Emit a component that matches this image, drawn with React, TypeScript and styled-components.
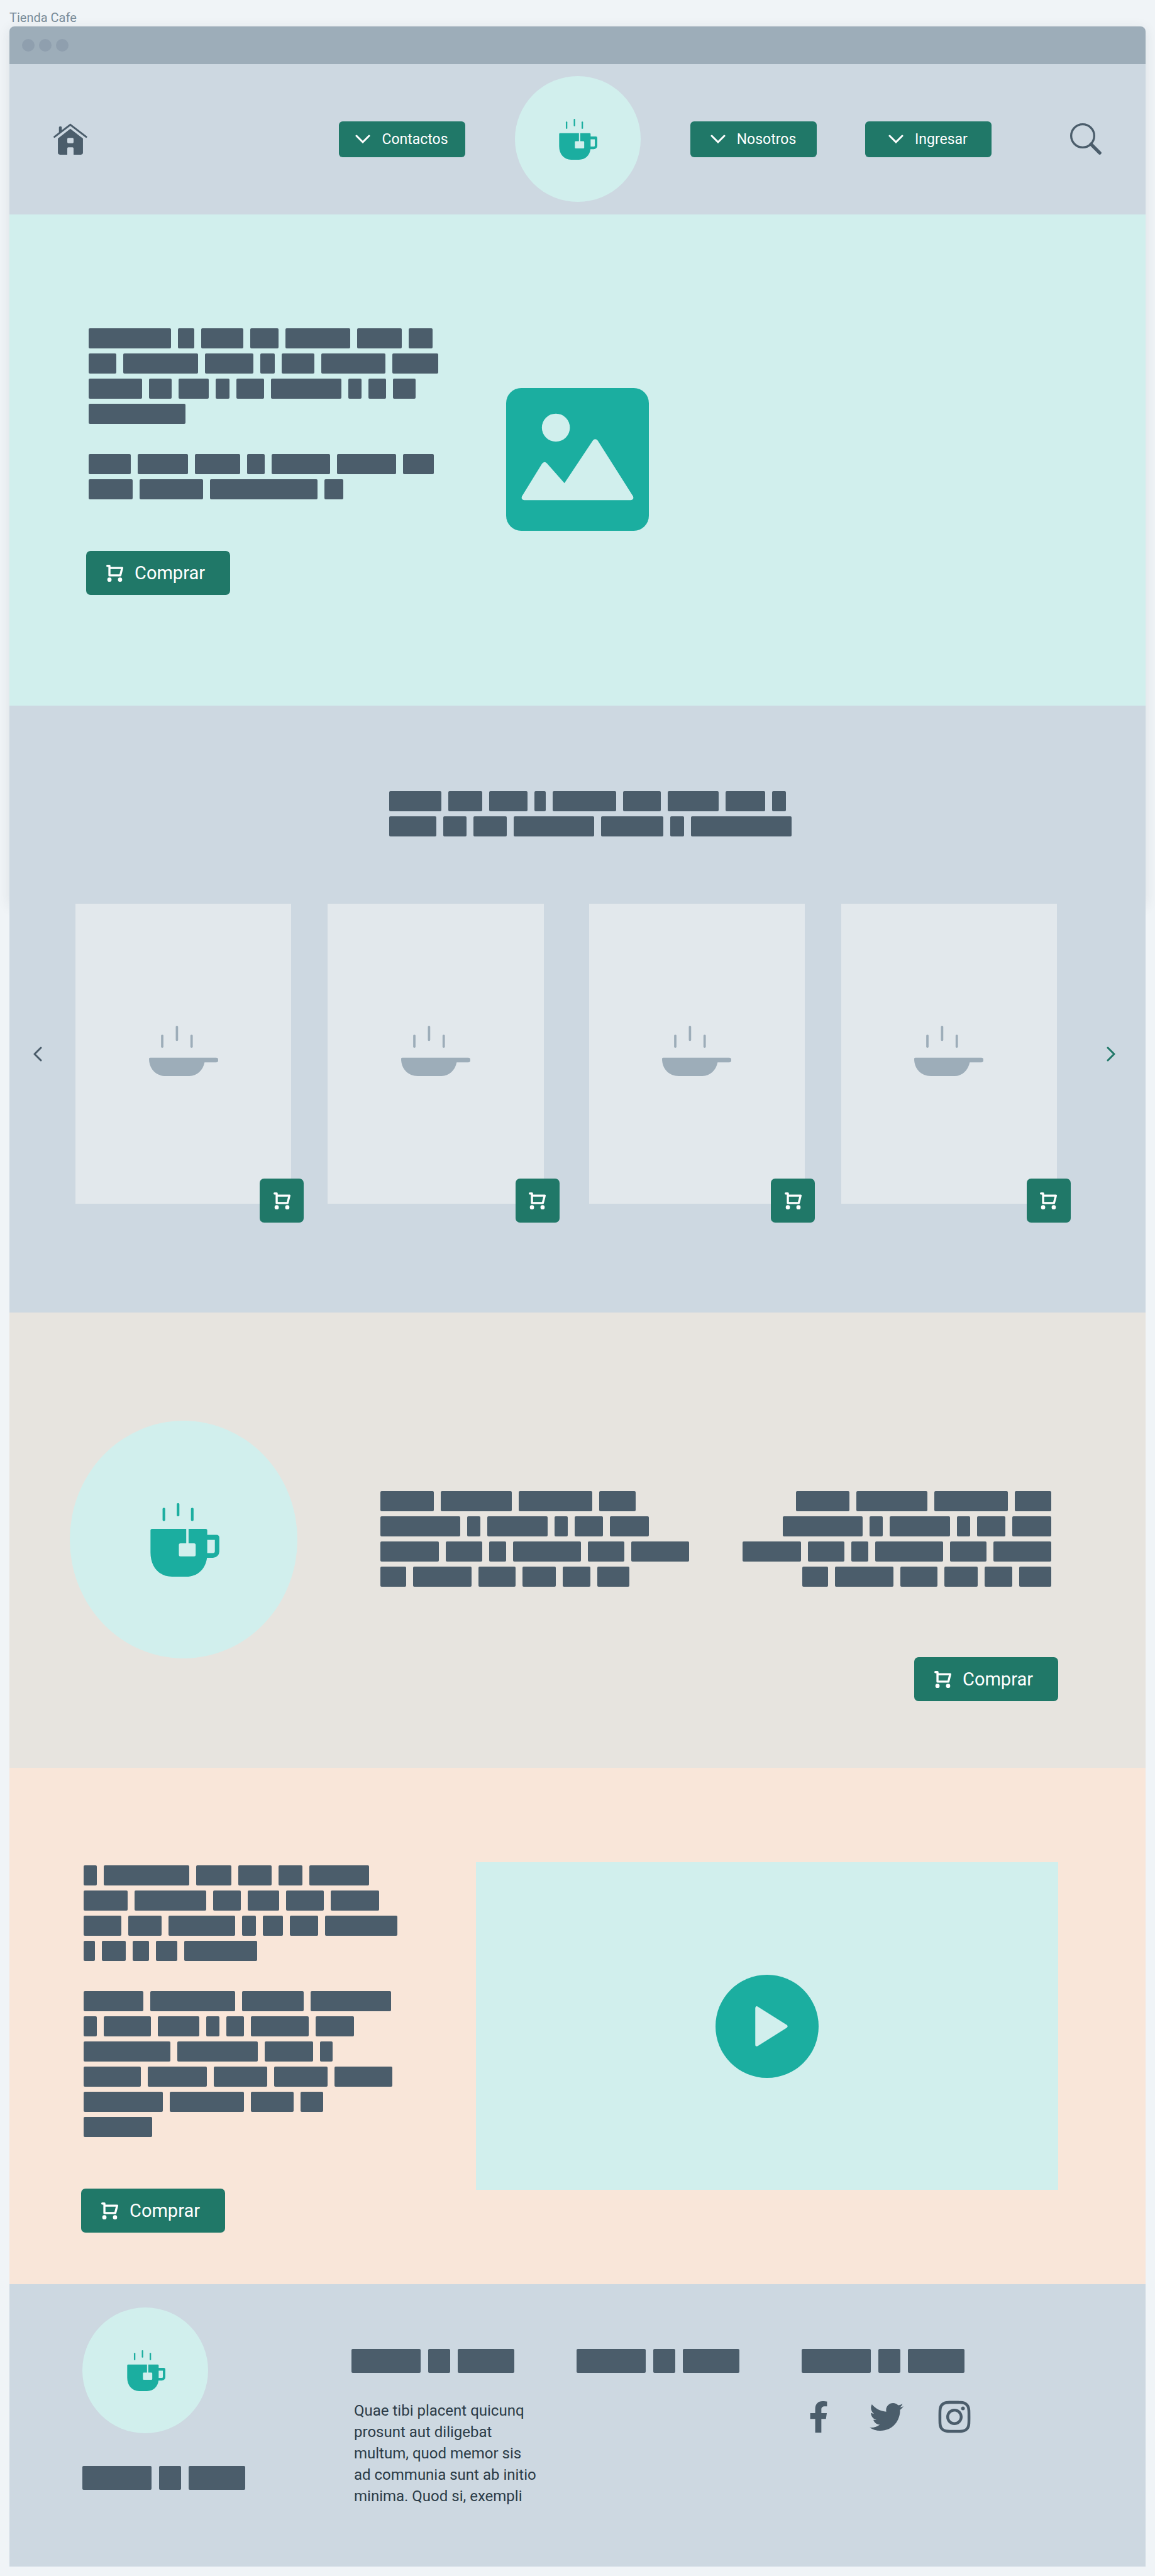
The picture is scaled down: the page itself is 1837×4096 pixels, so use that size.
import React from 'react';
import styled, { createGlobalStyle } from 'styled-components';
import { FaFacebookF, FaInstagram, FaTwitter } from 'react-icons/fa';

const color = {
  canvas: '#f0f4f7',
  chrome: '#9dadb9',
  chromeDot: '#8f9fae',
  fog: '#cdd8e1',
  mint: '#d1efed',
  teal: '#1baea0',
  green: '#207868',
  slate: '#4b5d6b',
  card: '#e2e8ec',
  sand: '#e7e4df',
  peach: '#f9e6d9',
  ink: '#2b3b47',
  label: '#7a8c99',
};

const GlobalStyle = createGlobalStyle`
  *, *::before, *::after { box-sizing: border-box; }
  body {
    margin: 0;
    background: ${color.canvas};
    font-family: Roboto, "Liberation Sans", sans-serif;
  }
  button { font-family: inherit; }
`;

/* ---------- shared parts ---------- */

const Page = styled.div`
  padding: 16px 15px 15px;
`;

const FrameLabel = styled.h1`
  margin: 0 0 2px;
  font-size: 20px;
  line-height: 24px;
  font-weight: 400;
  color: ${color.label};
`;

const Frame = styled.div`
  position: relative;
  z-index: 0;

  &::before {
    content: '';
    position: absolute;
    z-index: -1;
    inset: 0 0 auto;
    height: 1396px;
    border-radius: 8px;
    box-shadow: 0 4px 20px rgba(40, 50, 60, 0.1);
  }
`;

const SolidButton = styled.button`
  display: inline-flex;
  align-items: center;
  justify-content: center;
  border: 0;
  background: ${color.green};
  color: #fff;
  font-weight: 400;
  cursor: pointer;
`;

const BuyButtonBox = styled(SolidButton)`
  height: 70px;
  gap: 18px;
  padding: 0 40px 0 32px;
  border-radius: 7px;
  font-size: 29px;
  line-height: 34px;
`;

const Lines = styled.div<{ $end?: boolean }>`
  display: flex;
  flex-direction: column;
  align-items: ${(p) => (p.$end ? 'flex-end' : 'flex-start')};
  gap: 8px;
`;

const Line = styled.div<{ $tall?: boolean }>`
  display: flex;
  gap: ${(p) => (p.$tall ? 12 : 11)}px;
  height: ${(p) => (p.$tall ? 38 : 32)}px;
`;

const Word = styled.span`
  border-radius: 2px;
  background: ${color.slate};
`;

const Disc = styled.div<{ $large?: boolean }>`
  display: flex;
  flex: none;
  align-items: center;
  justify-content: center;
  width: ${(p) => (p.$large ? 362 : 200)}px;
  height: ${(p) => (p.$large ? 378 : 200)}px;
  border-radius: 50%;
  background: ${color.mint};
`;

const Redacted = ({ lines, end }: { lines: number[][]; end?: boolean }) => (
  <Lines $end={end}>
    {lines.map((line, i) => (
      <Line key={i}>
        {line.map((width, j) => (
          <Word key={j} style={{ width }} />
        ))}
      </Line>
    ))}
  </Lines>
);

const RedactedTitle = () => (
  <Line $tall>
    {[110, 35, 90].map((width) => (
      <Word key={width} style={{ width }} />
    ))}
  </Line>
);

/* ---------- drawings ---------- */

const CupIcon = ({ width, height }: { width: number; height: number }) => (
  <svg width={width} height={height} viewBox="-5 0 136 140" fill={color.teal} aria-hidden="true">
    <rect x="23" y="9" width="5" height="25" rx="2" />
    <rect x="50" y="0" width="5" height="25" rx="2" />
    <rect x="77" y="9" width="5" height="25" rx="2" />
    <path
      fillRule="evenodd"
      d="M3 49H68V76.500H57a3 3 0 0 0-3 3V98.500a3 3 0 0 0 3 3H83a3 3 0 0 0 3-3V79.500a3 3 0 0 0-3-3H72.500V49H105a3 3 0 0 1 3 3V60.500H126a5 5 0 0 1 5 5V92a12 12 0 0 1-12 12H107.500C105 125 90 140 68 140H41C16 140 0 121 0 94V52a3 3 0 0 1 3-3ZM108 70V95H119a3.500 3.500 0 0 0 3.500-3.500V70Z"
    />
  </svg>
);

const PanIcon = () => (
  <svg width="110" height="90" viewBox="0 0 132 108" fill={color.chrome} aria-hidden="true">
    <rect x="23" y="17" width="4.500" height="25" rx="2" />
    <rect x="51" y="0" width="4.500" height="29" rx="2" />
    <rect x="79" y="17" width="4.500" height="25" rx="2" />
    <path d="M2 61H128a4 4 0 0 1 4 4V66a4 4 0 0 1-4 4H106C103 85 92 96 77 96H32C13 96 0 82 0 63a2 2 0 0 1 2-2Z" />
  </svg>
);

const CartIcon = () => (
  <svg width="27" height="27" viewBox="0 0 32 32" aria-hidden="true">
    <g fill="none" stroke="#fff" strokeWidth="4" strokeLinecap="round" strokeLinejoin="round">
      <path d="M2 2H6V20H26.500L30 6H6" />
    </g>
    <circle cx="6" cy="28" r="4" fill="#fff" />
    <circle cx="26" cy="28" r="4" fill="#fff" />
  </svg>
);

const ChevronDown = () => (
  <svg width="24" height="14" viewBox="0 0 24 14" aria-hidden="true">
    <path d="M2 2L12 12L22 2" fill="none" stroke="#fff" strokeWidth="3" strokeLinecap="round" />
  </svg>
);

const HomeIcon = () => (
  <svg width="54" height="50" viewBox="0 0 65 60" fill={color.slate} aria-hidden="true">
    <path d="M10.500 20V8a2 2 0 0 1 2-2h1.500a2 2 0 0 1 2 2v7.500Z" />
    <path
      d="M2 26L32.300 2.700L62.700 26"
      fill="none"
      stroke={color.slate}
      strokeWidth="3.600"
      strokeLinecap="round"
    />
    <path
      fillRule="evenodd"
      d="M32.300 10.500L56.500 29V56a4 4 0 0 1-4 4H38.500V48a2 2 0 0 0-2-2h-8a2 2 0 0 0-2 2V60H12.500a4 4 0 0 1-4-4V29ZM28.500 28a2 2 0 0 0-2 2v6a2 2 0 0 0 2 2h8a2 2 0 0 0 2-2v-6a2 2 0 0 0-2-2Z"
    />
  </svg>
);

const SearchIcon = () => (
  <svg width="50" height="50" viewBox="0 0 60 60" fill="none" stroke={color.slate} aria-hidden="true">
    <circle cx="24" cy="24" r="22" strokeWidth="4" />
    <path d="M40 40L56.500 56.500" strokeWidth="6.500" strokeLinecap="round" />
    <path d="M38 38L43 43" strokeWidth="5" />
  </svg>
);

const PictureIcon = () => (
  <svg width="227" height="227" viewBox="0 0 815 815" role="img" aria-label="Imagen">
    <rect width="815" height="815" rx="86" fill={color.teal} />
    <circle cx="284" cy="226" r="80" fill={color.mint} />
    <path
      fill={color.mint}
      d="M90 618L205 432Q218 414 233 430L333 543L495 300Q508 283 523 300L725 618Q731 638 712 640H103Q84 638 90 618Z"
    />
  </svg>
);

const PlayIcon = () => (
  <svg width="164" height="164" viewBox="0 0 63 63" aria-hidden="true">
    <circle cx="31.500" cy="31.500" r="31.500" fill={color.teal} />
    <path
      d="M25.300 20.300V42.700L43 31.500Z"
      fill={color.mint}
      stroke={color.mint}
      strokeWidth="2"
      strokeLinejoin="round"
    />
  </svg>
);

const BuyButton = () => (
  <BuyButtonBox type="button">
    <CartIcon />
    Comprar
  </BuyButtonBox>
);

/* ---------- browser bar and header ---------- */

const Chrome = styled.div`
  display: flex;
  align-items: center;
  gap: 7px;
  height: 60px;
  padding: 0 20px;
  border-radius: 8px 8px 0 0;
  background: ${color.chrome};
`;

const ChromeDot = styled.span`
  width: 20px;
  height: 20px;
  border-radius: 50%;
  background: ${color.chromeDot};
`;

const Header = styled.header`
  display: grid;
  grid-template-columns: 1fr auto 1fr;
  align-items: center;
  column-gap: 79px;
  padding: 19px 70px 20px;
  background: ${color.fog};
`;

const HeaderSide = styled.div`
  display: flex;
  align-items: center;
  justify-content: space-between;
`;

const HeaderNav = styled.nav`
  display: flex;
  gap: 77px;
`;

const NavButton = styled(SolidButton)`
  gap: 18px;
  width: 201px;
  height: 57px;
  border-radius: 6px;
  font-size: 23px;
  line-height: 27px;
`;

const IconLink = styled.a`
  display: flex;
`;

const IconButton = styled.button<{ $tone?: string }>`
  display: flex;
  padding: 0;
  border: 0;
  background: none;
  color: ${(p) => p.$tone || color.slate};
  cursor: pointer;
`;

const NavItem = ({ children }: { children: React.ReactNode }) => (
  <NavButton type="button">
    <ChevronDown />
    {children}
  </NavButton>
);

/* ---------- hero ---------- */

const Hero = styled.section`
  display: grid;
  grid-template-columns: 1fr auto 1fr;
  align-items: center;
  padding: 174px 122px 176px;
  background: ${color.mint};
`;

const CopyColumn = styled.div<{ $top?: number }>`
  display: flex;
  flex-direction: column;
  align-items: flex-start;
  gap: 82px;
  padding-top: ${(p) => p.$top || 0}px;
`;

const Copy = styled.div`
  display: flex;
  flex-direction: column;
  gap: 48px;
  padding-left: 4px;
`;

/* ---------- products ---------- */

const Products = styled.section`
  padding: 136px 48px 143px 38px;
  background: ${color.fog};
`;

const ProductsTitle = styled.div`
  display: flex;
  justify-content: center;
  padding-left: 51px;
  margin-bottom: 107px;
`;

const Carousel = styled.div`
  display: grid;
  grid-template-columns: 14px 1fr 14px;
  align-items: center;
`;

const CardPairs = styled.div`
  display: grid;
  grid-template-columns: 1fr 1fr;
  gap: 72px;
  padding: 0 79px 0 53px;
`;

const CardPair = styled.div`
  display: grid;
  grid-template-columns: 1fr 1fr;
  gap: 58px;
`;

const Card = styled.article`
  display: flex;
  align-items: center;
  justify-content: center;
  aspect-ratio: 410 / 570;
  background: ${color.card};
`;

const CartRow = styled.div`
  position: relative;
  display: flex;
  justify-content: space-between;
  margin-top: -40px;
  padding: 0 71px 0 360px;
`;

const CartButton = styled(SolidButton)`
  width: 70px;
  height: 70px;
  padding: 0;
  border-radius: 7px;
`;

const ArrowIcon = ({ d }: { d: string }) => (
  <svg width="14" height="24" viewBox="0 0 14 24" aria-hidden="true">
    <path
      d={d}
      fill="none"
      stroke="currentColor"
      strokeWidth="3"
      strokeLinecap="round"
      strokeLinejoin="round"
    />
  </svg>
);

/* ---------- feature ---------- */

const Feature = styled.section`
  display: flex;
  align-items: flex-start;
  padding: 172px 139px 106px 96px;
  background: ${color.sand};
`;

const FeatureText = styled.div`
  padding: 112px 0 0 132px;
`;

const FeatureAside = styled.div`
  display: flex;
  flex-direction: column;
  align-items: flex-end;
  gap: 112px;
  margin-left: auto;
  padding-top: 112px;
`;

const AsideCopy = styled.div`
  padding-right: 11px;
`;

/* ---------- video ---------- */

const VideoSection = styled.section`
  display: grid;
  grid-template-columns: 628fr 926fr;
  align-items: start;
  padding: 150px 139px 82px 114px;
  background: ${color.peach};
`;

const VideoBox = styled.div`
  display: flex;
  align-items: center;
  justify-content: center;
  aspect-ratio: 16 / 9;
  background: ${color.mint};
`;

/* ---------- footer ---------- */

const Footer = styled.footer`
  display: grid;
  grid-template-columns: 428fr 358fr 358fr 547fr;
  padding: 37px 0 95px 116px;
  background: ${color.fog};
`;

const FooterBrand = styled.div`
  display: flex;
  flex-direction: column;
  align-items: flex-start;
  gap: 52px;
`;

const FooterColumn = styled.div`
  display: flex;
  flex-direction: column;
  gap: 43px;
  padding-top: 66px;
`;

const FooterText = styled.p`
  max-width: 299px;
  margin: 0;
  padding-left: 4px;
  font-size: 24px;
  line-height: 34px;
  color: ${color.ink};
`;

const Socials = styled.div`
  display: flex;
  gap: 54px;
`;

const SocialLink = styled.a`
  display: flex;
  align-items: center;
  justify-content: center;
  width: 54px;
  height: 54px;
  color: ${color.slate};

  svg { flex: none; }
`;

/* ---------- placeholder copy: word widths per line ---------- */

const heroFirst = [
  [131, 26, 67, 45, 103, 71, 38],
  [44, 119, 77, 23, 52, 102, 73],
  [85, 36, 48, 22, 44, 112, 21, 28, 36],
  [154],
];
const heroSecond = [
  [67, 80, 72, 28, 93, 94, 49],
  [70, 101, 171, 30],
];
const productsTitle = [
  [83, 54, 61, 18, 101, 60, 81, 63, 22],
  [75, 37, 53, 128, 99, 22, 160],
];
const featureCopy = [
  [85, 113, 117, 58],
  [127, 21, 96, 21, 45, 62],
  [93, 58, 27, 108, 58, 92],
  [41, 93, 59, 53, 44, 51],
];
const videoFirst = [
  [21, 136, 56, 53, 38, 95],
  [70, 114, 44, 50, 60, 77],
  [60, 53, 106, 22, 32, 45, 115],
  [18, 38, 26, 34, 116],
];
const videoSecond = [
  [95, 135, 98, 128],
  [21, 75, 66, 21, 28, 92, 61],
  [138, 128, 77, 20],
  [91, 94, 85, 85, 92],
  [126, 118, 68, 36],
  [109],
];

export default function App() {
  return (
    <Page>
      <GlobalStyle />
      <FrameLabel>Tienda Cafe</FrameLabel>
      <Frame>
        <Chrome>
          <ChromeDot />
          <ChromeDot />
          <ChromeDot />
        </Chrome>

        <Header>
          <HeaderSide>
            <IconLink href="#" aria-label="Inicio">
              <HomeIcon />
            </IconLink>
            <NavItem>Contactos</NavItem>
          </HeaderSide>
          <Disc>
            <CupIcon width={63} height={65} />
          </Disc>
          <HeaderSide>
            <HeaderNav>
              <NavItem>Nosotros</NavItem>
              <NavItem>Ingresar</NavItem>
            </HeaderNav>
            <IconButton type="button" aria-label="Buscar">
              <SearchIcon />
            </IconButton>
          </HeaderSide>
        </Header>

        <Hero>
          <CopyColumn $top={7}>
            <Copy>
              <Redacted lines={heroFirst} />
              <Redacted lines={heroSecond} />
            </Copy>
            <BuyButton />
          </CopyColumn>
          <PictureIcon />
        </Hero>

        <Products>
          <ProductsTitle>
            <Redacted lines={productsTitle} />
          </ProductsTitle>
          <Carousel>
            <IconButton type="button" aria-label="Anterior">
              <ArrowIcon d="M12 2L2 12L12 22" />
            </IconButton>
            <CardPairs>
              {[0, 1].map((pair) => (
                <CardPair key={pair}>
                  <Card>
                    <PanIcon />
                  </Card>
                  <Card>
                    <PanIcon />
                  </Card>
                </CardPair>
              ))}
            </CardPairs>
            <IconButton type="button" aria-label="Siguiente" $tone={color.green}>
              <ArrowIcon d="M2 2L12 12L2 22" />
            </IconButton>
          </Carousel>
          <CartRow>
            {[1, 2, 3, 4].map((n) => (
              <CartButton key={n} type="button" aria-label={`Comprar producto ${n}`}>
                <CartIcon />
              </CartButton>
            ))}
          </CartRow>
        </Products>

        <Feature>
          <Disc $large>
            <CupIcon width={114} height={117} />
          </Disc>
          <FeatureText>
            <Redacted lines={featureCopy} />
          </FeatureText>
          <FeatureAside>
            <AsideCopy>
              <Redacted lines={featureCopy} end />
            </AsideCopy>
            <BuyButton />
          </FeatureAside>
        </Feature>

        <VideoSection>
          <CopyColumn $top={5}>
            <Copy>
              <Redacted lines={videoFirst} />
              <Redacted lines={videoSecond} />
            </Copy>
            <BuyButton />
          </CopyColumn>
          <VideoBox>
            <IconButton type="button" aria-label="Reproducir">
              <PlayIcon />
            </IconButton>
          </VideoBox>
        </VideoSection>

        <Footer>
          <FooterBrand>
            <Disc>
              <CupIcon width={63} height={65} />
            </Disc>
            <RedactedTitle />
          </FooterBrand>
          <FooterColumn>
            <RedactedTitle />
            <FooterText>
              Quae tibi placent quicunq prosunt aut diligebat multum, quod memor sis ad communia sunt
              ab initio minima. Quod si, exempli
            </FooterText>
          </FooterColumn>
          <FooterColumn>
            <RedactedTitle />
          </FooterColumn>
          <FooterColumn>
            <RedactedTitle />
            <Socials>
              <SocialLink href="#" aria-label="Facebook">
                <FaFacebookF size={50} />
              </SocialLink>
              <SocialLink href="#" aria-label="Twitter">
                <FaTwitter size={54} />
              </SocialLink>
              <SocialLink href="#" aria-label="Instagram">
                <FaInstagram size={58} />
              </SocialLink>
            </Socials>
          </FooterColumn>
        </Footer>
      </Frame>
    </Page>
  );
}
